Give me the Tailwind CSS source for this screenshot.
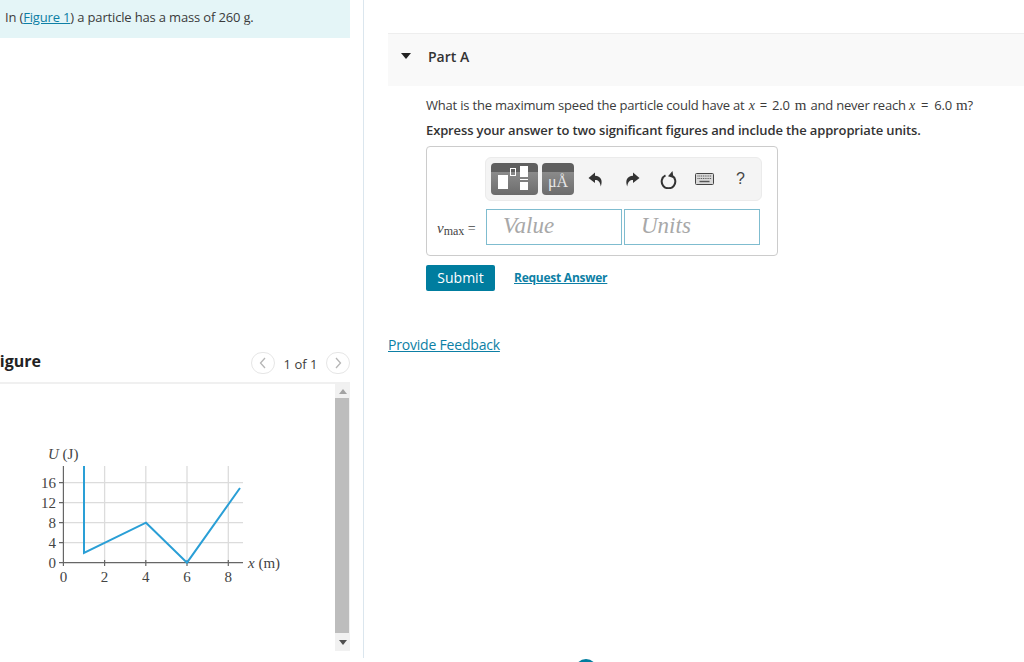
<!DOCTYPE html>
<html lang="en">
  <head>
    <meta charset="UTF-8" />
    <meta name="viewport" content="width=device-width, initial-scale=1.0" />
    <title>Part A</title>
    <script src="https://cdn.jsdelivr.net/npm/@tailwindcss/browser@4"></script>
  </head>
  <body class="bg-white h-[662px] overflow-hidden relative font-['Open_Sans',sans-serif] text-[#3b3b3b]">
    <div class="flex h-[658px]">
      <!-- left pane -->
      <div class="w-[364px] shrink-0 border-r border-[#dbe6ee] pr-[13px] flex flex-col">
        <div class="h-[38px] bg-[#e4f5f7] pl-[5px] pt-[8px] text-[13px] leading-[18px] tracking-[-0.16px]">
          In (<a href="#" class="text-[#0d7fa5] underline">Figure 1</a>) a particle has a mass of 260 <span class="font-['Liberation_Serif',serif] text-[14px]">g</span>.
        </div>
        <div class="mt-[313px] h-[31px] flex items-start justify-between overflow-hidden">
          <h3 class="-ml-[9px] text-[16px] leading-[20px] font-bold text-[#222]">Figure</h3>
          <div class="flex items-center text-[13px] mt-[1px]">
            <button class="w-[24px] h-[22px] rounded-full border border-[#e6e6e6] flex items-center justify-center">
              <svg width="8" height="12" viewBox="0 0 8 12" fill="none" stroke="#b5b5b5" stroke-width="1.3"><path d="M6 1 1.5 6 6 11" /></svg>
            </button>
            <span class="w-[51px] text-center relative top-[2px]">1 of 1</span>
            <button class="w-[24px] h-[22px] rounded-full border border-[#e6e6e6] flex items-center justify-center">
              <svg width="8" height="12" viewBox="0 0 8 12" fill="none" stroke="#b5b5b5" stroke-width="1.3"><path d="M2 1 6.5 6 2 11" /></svg>
            </button>
          </div>
        </div>
        <div class="h-[269px] border-t-2 border-[#f0f0f0] flex justify-between">
          <svg class="mt-[56px] ml-[30px]" width="260" height="150" viewBox="30 440 260 150">
            <g stroke="#dcdcdc" stroke-width="1.300">
              <path d="M104.600 466V563M145.800 466V563M187 466V563M228.300 466V563" />
              <path d="M63 482.700H243M63 502.700H243M63 522.700H243M63 542.700H243" />
            </g>
            <g stroke="#666" stroke-width="1.200" fill="none">
              <path d="M63.400 466V566M59 562.700H243" />
              <path d="M59 482.700H64M59 502.700H64M59 522.700H64M59 542.700H64M104.600 560V566M145.800 560V566M187 560V566M228.300 560V566" />
            </g>
            <path d="M84 466V553L146 522.700 187 562.700 240 488" fill="none" stroke="#2a9fd6" stroke-width="2" />
            <g font-family="Liberation Serif" font-size="15" fill="#444">
              <text x="48" y="459"><tspan font-style="italic">U</tspan> (J)</text>
              <text x="56" y="488" text-anchor="end">16</text>
              <text x="56" y="508" text-anchor="end">12</text>
              <text x="56" y="528" text-anchor="end">8</text>
              <text x="56" y="548" text-anchor="end">4</text>
              <text x="56" y="568" text-anchor="end">0</text>
              <text x="63.400" y="582" text-anchor="middle">0</text>
              <text x="104.600" y="582" text-anchor="middle">2</text>
              <text x="145.800" y="582" text-anchor="middle">4</text>
              <text x="187" y="582" text-anchor="middle">6</text>
              <text x="228.300" y="582" text-anchor="middle">8</text>
              <text x="248" y="568"><tspan font-style="italic">x</tspan> (m)</text>
            </g>
          </svg>
          <!-- scrollbar -->
          <div class="w-[15px] h-[267px] bg-[#f1f1f1] flex flex-col items-center">
            <div class="h-[14px] flex items-center">
              <svg width="8" height="5" viewBox="0 0 8 5"><path d="M4 0 8 5H0z" fill="#a3a3a3" /></svg>
            </div>
            <div class="w-[14px] h-[235px] bg-[#bdbdbd] self-start"></div>
            <div class="h-[18px] flex items-center">
              <svg width="8" height="5" viewBox="0 0 8 5"><path d="M0 0H8L4 5z" fill="#505050" /></svg>
            </div>
          </div>
        </div>
      </div>

      <!-- right pane -->
      <div class="flex-1 pl-[24px] pt-[33px]">
        <div class="h-[53px] bg-[#f9f9f9] border-t border-[#eeeeee] flex items-center pl-[13px] pb-[8px]">
          <svg width="10" height="6" viewBox="0 0 10 6"><path d="M0 0H10L5 6z" fill="#222" /></svg>
          <h2 class="ml-[17px] text-[14px] font-semibold text-[#333]">Part A</h2>
        </div>
        <div class="pl-[38px]">
          <p class="mt-[10px] text-[13px] leading-[18px] tracking-[-0.2px] whitespace-nowrap">
            What is the maximum speed the particle could have at <span class="font-['Liberation_Serif',serif] italic text-[14px] ml-[1px]">x</span><span class="mx-[5px]">=</span>2.0 <span class="font-['Liberation_Serif',serif] text-[15px] ml-[2px]">m</span><span class="ml-[1px]"> and never reach </span><span class="font-['Liberation_Serif',serif] italic text-[14px]">x</span><span class="mx-[6px]">=</span>6.0 <span class="font-['Liberation_Serif',serif] text-[15px] ml-[1px]">m</span>?
          </p>
          <p class="mt-[6px] text-[13px] leading-[18px] font-semibold tracking-[-0.13px] whitespace-nowrap text-[#333]">
            Express your answer to two significant figures and include the appropriate units.
          </p>
          <div class="mt-[7px] w-[352px] h-[110px] border border-[#cccccc] rounded-[4px] relative pt-[10px] pl-[58px]">
            <div class="w-[277px] h-[44px] bg-[#f4f4f4] border border-[#ebebeb] rounded-[6px] flex items-center pl-[5px]">
              <div class="w-[47px] h-[32px] rounded-[4px] bg-[linear-gradient(#5f5f5f_0,#5f5f5f_27%,#8b8b8b_28%,#6c6c6c_100%)] flex items-start pl-[7px] pt-[3px]">
                <span class="w-[10px] h-[14px] bg-white mt-[9px]"></span>
                <span class="w-[6px] h-[8px] border border-white ml-[2px] mt-[2px]"></span>
                <span class="flex flex-col ml-[4px]">
                  <span class="block w-[8px] h-[11px] bg-white"></span>
                  <span class="block w-[8px] h-[1px] bg-white mt-[2px]"></span>
                  <span class="block w-[8px] h-[8px] bg-white mt-[2px]"></span>
                </span>
              </div>
              <div class="ml-[4px] w-[32px] h-[32px] rounded-[4px] bg-[linear-gradient(#5f5f5f_0,#5f5f5f_27%,#8b8b8b_28%,#6c6c6c_100%)] flex items-end justify-center pb-[4px] font-['Liberation_Serif',serif] text-[16px] leading-[18px] text-[#e6e6e6]">
                μÅ
              </div>
              <svg class="ml-[14px]" width="16" height="17" viewBox="0 0 16 17"><path d="M7 1.500.500 7 7 12V9c3.300 0 5 1.500 5.800 6.500C15 9.500 13 5 7 4.800z" fill="#333" /></svg>
              <svg class="ml-[20px]" width="16" height="17" viewBox="0 0 16 17"><path d="M9 1.500 15.500 7 9 12V9c-3.300 0-5 1.500-5.800 6.500C1 9.500 3 5 9 4.800z" fill="#333" /></svg>
              <svg class="ml-[20px]" width="17" height="19" viewBox="0 0 17 19" fill="none"><path d="M5.500 5.400a6.800 6.800 0 1 0 6 0" stroke="#333" stroke-width="2" /><path d="M12.500 1 8 6.200 13.500 8z" fill="#333" /></svg>
              <svg class="ml-[18px]" width="19" height="12" viewBox="0 0 19 12"><rect x=".5" y=".5" width="18" height="11" rx="1" fill="#d8d8d8" stroke="#444" /><path d="M2.500 3H16.500M2.500 5.500H16.500" stroke="#555" stroke-width="1.200" stroke-dasharray="1 .8" /><path d="M4.500 8.500H14.500" stroke="#555" stroke-width="1.400" /></svg>
              <span class="ml-[22px] font-['Liberation_Sans',sans-serif] text-[16px] text-[#444]">?</span>
            </div>
            <div class="flex mt-[8px] ml-[1px] gap-[1px]">
              <div class="w-[136px] h-[36px] border border-[#7fbccf] pl-[16px] font-['Liberation_Serif',serif] italic text-[23px] leading-[31px] text-[#a8a8a8]">Value</div>
              <div class="w-[136px] h-[36px] ml-[1px] border border-[#7fbccf] pl-[16px] font-['Liberation_Serif',serif] italic text-[23px] leading-[31px] text-[#a8a8a8]">Units</div>
            </div>
            <div class="absolute left-[10px] top-[72px] font-['Liberation_Serif',serif] text-[14px] leading-[18px] text-[#444] whitespace-nowrap">
              <span class="italic text-[15px]">v</span><span class="text-[12px] relative top-[2px]">max</span> =
            </div>
          </div>
          <div class="mt-[9px] flex items-center">
            <button class="w-[69px] h-[26px] bg-[#007d9f] rounded-[2px] text-white text-[14px] leading-[26px]">Submit</button>
            <a href="#" class="ml-[19px] text-[12px] font-bold tracking-[-0.25px] text-[#0d7fa5] underline">Request Answer</a>
          </div>
        </div>
        <a href="#" class="block mt-[44px] text-[14px] leading-[20px] tracking-[-0.2px] text-[#0d7fa5] underline">Provide Feedback</a>
      </div>
    </div>
    <!-- chat button peeking from the bottom edge -->
    <div class="absolute left-[575px] top-[659px] w-[22px] h-[22px] rounded-full bg-[#007d9f]"></div>
  </body>
</html>
